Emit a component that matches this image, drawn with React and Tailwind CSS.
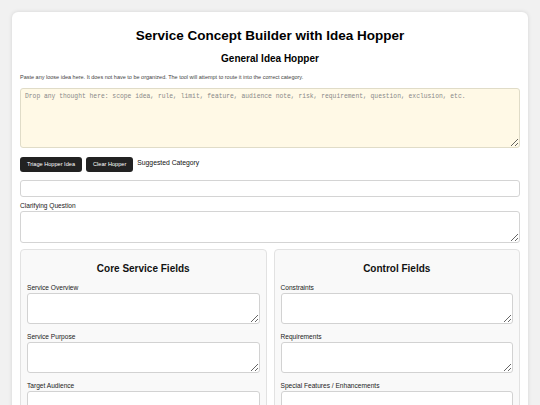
import React, { useState } from 'react'

const coreFields = ['Service Overview', 'Service Purpose', 'Target Audience', 'Service Scope']
const controlFields = ['Constraints', 'Requirements', 'Special Features / Enhancements', 'Exclusions']

const Panel = ({ title, fields }) => (
  <div className="flex-1 bg-[#f9f9f9] border border-[#e2e2e2] rounded-[4px] px-[6px] pt-[13px] pb-2">
    <h3 className="text-[10px] leading-[11.5px] font-bold text-center text-[#111] mb-[10px]">{title}</h3>
    {fields.map((f) => (
      <div key={f} className="mb-[9px]">
        <label className="block text-[6.6px] leading-[7.5px] text-[#222] mb-[1.5px]">{f}</label>
        <textarea className="block w-full h-[31px] bg-white border border-[#d2d2d2] rounded-[3px] resize-y" />
      </div>
    ))}
  </div>
)

const App = () => {
  const [idea, setIdea] = useState('')

  return (
    <div className="min-h-screen bg-[#f1f1f1] pt-3 px-3 font-['Liberation_Sans',Arial,sans-serif] text-black">
      <div className="bg-white rounded-[6px] shadow-[0_0_4px_rgba(0,0,0,0.12)] px-2 pt-[16px] pb-6">
        <h1 className="text-[13.5px] leading-[15.5px] font-bold text-center">Service Concept Builder with Idea Hopper</h1>
        <h2 className="text-[10px] leading-[11.5px] font-bold text-center mt-[9.5px]">General Idea Hopper</h2>
        <p className="text-[5.5px] leading-[6px] text-[#444] mt-[9px]">
          Paste any loose idea here. It does not have to be organized. The tool will attempt to route it into the correct category.
        </p>
        <textarea
          value={idea}
          onChange={(e) => setIdea(e.target.value)}
          placeholder="Drop any thought here: scope idea, rule, limit, feature, audience note, risk, requirement, question, exclusion, etc."
          className="block w-full h-[60px] mt-[8px] bg-[#fff9e6] border border-[#e0dcc8] rounded-[3px] px-[4px] py-[4px] font-['Liberation_Mono',monospace] text-[6.33px] leading-[8px] placeholder:text-[#888] resize-y"
        />
        <div className="flex items-center gap-[4px] mt-[9.5px]">
          <button className="h-[14.5px] px-[7px] bg-[#222] text-white text-[5.6px] rounded-[3px]">Triage Hopper Idea</button>
          <button className="h-[14.5px] px-[7px] bg-[#222] text-white text-[5.6px] rounded-[3px]">Clear Hopper</button>
          <span className="text-[6.8px] text-[#111] -mt-[2px]">Suggested Category</span>
        </div>
        <input className="block w-full h-[17px] mt-[8.5px] border border-[#d4d4d4] rounded-[3px] bg-white" />
        <label className="block text-[6.6px] leading-[7.5px] text-[#222] mt-[4.5px]">Clarifying Question</label>
        <textarea className="block w-full h-[32px] mt-[1.5px] border border-[#d4d4d4] rounded-[3px] bg-white resize-y" />
        <div className="flex gap-[7px] mt-[6px]">
          <Panel title="Core Service Fields" fields={coreFields} />
          <Panel title="Control Fields" fields={controlFields} />
        </div>
      </div>
    </div>
  )
}

export default App
